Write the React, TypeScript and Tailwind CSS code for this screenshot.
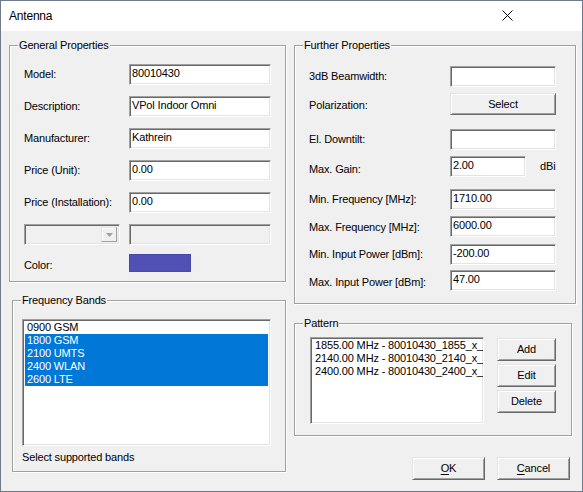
import React from "react";

const FONT = "font-['Liberation_Sans',Arial,sans-serif]";

function TextBox({
  value,
  className = "",
  disabled = false,
}: {
  value?: string;
  className?: string;
  disabled?: boolean;
}) {
  return (
    <div
      className={`h-[21px] border border-t-[#a0a0a0] border-l-[#a0a0a0] border-r-white border-b-white shadow-[inset_1px_1px_0_#696969,inset_-1px_-1px_0_#e3e3e3] ${
        disabled ? "bg-[#f0f0f0]" : "bg-white"
      } flex items-center pl-[2px] pb-[2px] text-[11px] leading-none whitespace-nowrap overflow-hidden ${className}`}
    >
      {value}
    </div>
  );
}

function Button({
  children,
  className = "",
}: {
  children: React.ReactNode;
  className?: string;
}) {
  return (
    <div
      className={`border border-t-[#e3e3e3] border-l-[#e3e3e3] border-r-[#696969] border-b-[#696969] shadow-[inset_1px_1px_0_#ffffff,inset_-1px_-1px_0_#a0a0a0] bg-[#f0f0f0] flex items-center justify-center text-[11px] leading-none ${className}`}
    >
      {children}
    </div>
  );
}

function GroupBox({
  title,
  className = "",
  children,
}: {
  title: string;
  className?: string;
  children: React.ReactNode;
}) {
  return (
    <div
      className={`relative border border-[#a0a0a0] shadow-[1px_1px_0_#ffffff,inset_1px_1px_0_#ffffff] ${className}`}
    >
      <span className="absolute -top-[7px] left-[8px] bg-[#f0f0f0] px-[1px] text-[11px] leading-[12px]">
        {title}
      </span>
      {children}
    </div>
  );
}

function Row({
  label,
  labelWidth,
  children,
  className = "",
  labelClass = "",
}: {
  label: string;
  labelWidth: string;
  children: React.ReactNode;
  className?: string;
  labelClass?: string;
}) {
  return (
    <div className={`flex items-center ${className}`}>
      <div className={`${labelWidth} text-[11px] leading-none ${labelClass}`}>{label}</div>
      {children}
    </div>
  );
}

export default function App() {
  const bands = [
    { t: "0900 GSM", s: false },
    { t: "1800 GSM", s: true },
    { t: "2100 UMTS", s: true },
    { t: "2400 WLAN", s: true },
    { t: "2600 LTE", s: true },
  ];
  const patterns = [
    "1855.00 MHz - 80010430_1855_x_",
    "2140.00 MHz - 80010430_2140_x_",
    "2400.00 MHz - 80010430_2400_x_",
  ];
  return (
    <div
      className={`w-[583px] h-[492px] border border-[#6d7b8d] bg-[#f0f0f0] flex flex-col text-black ${FONT} tracking-[-0.15px]`}
    >
      {/* Title bar */}
      <div className="h-[30px] bg-white flex items-center justify-between pl-[8px] pr-[69px] shrink-0">
        <span className="text-[12px] leading-none tracking-[-0.2px] pb-[1px]">Antenna</span>
        <svg width="11" height="11" viewBox="0 0 11 11" className="mb-[1px]">
          <path d="M0.5 0.5 L10.5 10.5 M10.5 0.5 L0.5 10.5" stroke="#000" strokeWidth="1" />
        </svg>
      </div>

      {/* Body */}
      <div className="flex pl-[8px]">
        {/* Left column */}
        <div className="w-[277px] pt-[14px] flex flex-col">
          <GroupBox title="General Properties" className="h-[237px]">
            <div className="pl-[14px] pt-[18px] flex flex-col gap-[11px]">
              <Row label="Model:" labelWidth="w-[105px]">
                <TextBox value="80010430" className="w-[142px]" />
              </Row>
              <Row label="Description:" labelWidth="w-[105px]">
                <TextBox value="VPol Indoor Omni" className="w-[142px]" />
              </Row>
              <Row label="Manufacturer:" labelWidth="w-[105px]">
                <TextBox value="Kathrein" className="w-[142px]" />
              </Row>
              <Row label="Price (Unit):" labelWidth="w-[105px]">
                <TextBox value="0.00" className="w-[142px]" />
              </Row>
              <Row label="Price (Installation):" labelWidth="w-[105px]">
                <TextBox value="0.00" className="w-[142px]" />
              </Row>
              <div className="flex items-center">
                <div className="w-[96px] h-[21px] border border-t-[#a0a0a0] border-l-[#a0a0a0] border-r-white border-b-white shadow-[inset_1px_1px_0_#696969,inset_-1px_-1px_0_#e3e3e3] bg-[#f0f0f0] flex justify-end items-stretch p-[2px]">
                  <div className="w-[16px] border border-t-[#e3e3e3] border-l-[#e3e3e3] border-r-[#a0a0a0] border-b-[#a0a0a0] shadow-[inset_1px_1px_0_#ffffff] flex items-center justify-center">
                    <svg width="7" height="4" viewBox="0 0 7 4">
                      <path d="M0 0 H7 L3.5 4 Z" fill="#a0a0a0" />
                    </svg>
                  </div>
                </div>
                <TextBox disabled className="w-[142px] ml-[9px]" />
              </div>
              <Row label="Color:" labelWidth="w-[105px]" className="-mt-[2px]" labelClass="pt-[4px]">
                <div className="w-[62px] h-[18px] bg-[#5151b5] border border-[#4848a8]" />
              </Row>
            </div>
          </GroupBox>

          <GroupBox title="Frequency Bands" className="mt-[18px] ml-[3px] w-[274px] h-[172px]">
            <div className="pl-[9px] pt-[18px]">
              <div className="w-[249px] h-[127px] border border-t-[#a0a0a0] border-l-[#a0a0a0] border-r-white border-b-white shadow-[inset_1px_1px_0_#696969,inset_-1px_-1px_0_#e3e3e3] bg-white p-[2px] pt-[1px]">
                {bands.map((b) => (
                  <div
                    key={b.t}
                    className={`h-[13px] pl-[2px] flex items-center text-[11px] leading-none ${
                      b.s ? "bg-[#0078d7] text-white" : ""
                    }`}
                  >
                    {b.t}
                  </div>
                ))}
              </div>
              <div className="mt-[6px] text-[11px] leading-none">Select supported bands</div>
            </div>
          </GroupBox>
        </div>

        {/* Right column */}
        <div className="ml-[8px] w-[282px] pt-[14px] flex flex-col">
          <GroupBox title="Further Properties" className="h-[259px]">
            <div className="pl-[14px] pt-[20px] flex flex-col">
              <Row label="3dB Beamwidth:" labelWidth="w-[141px]">
                <TextBox className="w-[106px]" />
              </Row>
              <Row label="Polarization:" labelWidth="w-[141px]" className="mt-[6px]" labelClass="pt-[3px]">
                <Button className="w-[106px] h-[22px]">Select</Button>
              </Row>
              <Row label="El. Downtilt:" labelWidth="w-[141px]" className="mt-[14px]">
                <TextBox className="w-[106px]" />
              </Row>
              <Row label="Max. Gain:" labelWidth="w-[141px]" className="mt-[6px]" labelClass="pt-[6px]">
                <TextBox value="2.00" className="w-[76px]" />
                <span className="ml-[14px] text-[11px] leading-none">dBi</span>
              </Row>
              <Row label="Min. Frequency [MHz]:" labelWidth="w-[141px]" className="mt-[12px]">
                <TextBox value="1710.00" className="w-[106px]" />
              </Row>
              <Row label="Max. Frequency [MHz]:" labelWidth="w-[141px]" className="mt-[6px]" labelClass="pt-[2px]">
                <TextBox value="6000.00" className="w-[106px]" />
              </Row>
              <Row label="Min. Input Power [dBm]:" labelWidth="w-[141px]" className="mt-[7px]">
                <TextBox value="-200.00" className="w-[106px]" />
              </Row>
              <Row label="Max. Input Power [dBm]:" labelWidth="w-[141px]" className="mt-[5px]" labelClass="pt-[4px]">
                <TextBox value="47.00" className="w-[106px]" />
              </Row>
            </div>
          </GroupBox>

          <GroupBox title="Pattern" className="mt-[19px] w-[278px] h-[113px]">
            <div className="pl-[15px] pt-[13px] flex">
              <div className="w-[174px] h-[87px] border border-t-[#a0a0a0] border-l-[#a0a0a0] border-r-white border-b-white shadow-[inset_1px_1px_0_#696969,inset_-1px_-1px_0_#e3e3e3] bg-white p-[2px] pt-[1px] overflow-hidden">
                {patterns.map((p) => (
                  <div
                    key={p}
                    className="h-[13px] pl-[2px] flex items-center text-[11px] leading-none whitespace-nowrap"
                  >
                    {p}
                  </div>
                ))}
              </div>
              <div className="ml-[13px] flex flex-col gap-[3px] pt-[1px]">
                <Button className="w-[59px] h-[23px]">Add</Button>
                <Button className="w-[59px] h-[23px]">Edit</Button>
                <Button className="w-[59px] h-[23px]">Delete</Button>
              </div>
            </div>
          </GroupBox>

          <div className="mt-[21px] flex justify-end gap-[12px] pr-[6px]">
            <Button className="w-[73px] h-[23px]">
              <span className="underline underline-offset-[2px]">O</span>K
            </Button>
            <Button className="w-[73px] h-[23px]">
              <span className="underline underline-offset-[2px]">C</span>ancel
            </Button>
          </div>
        </div>
      </div>
    </div>
  );
}
